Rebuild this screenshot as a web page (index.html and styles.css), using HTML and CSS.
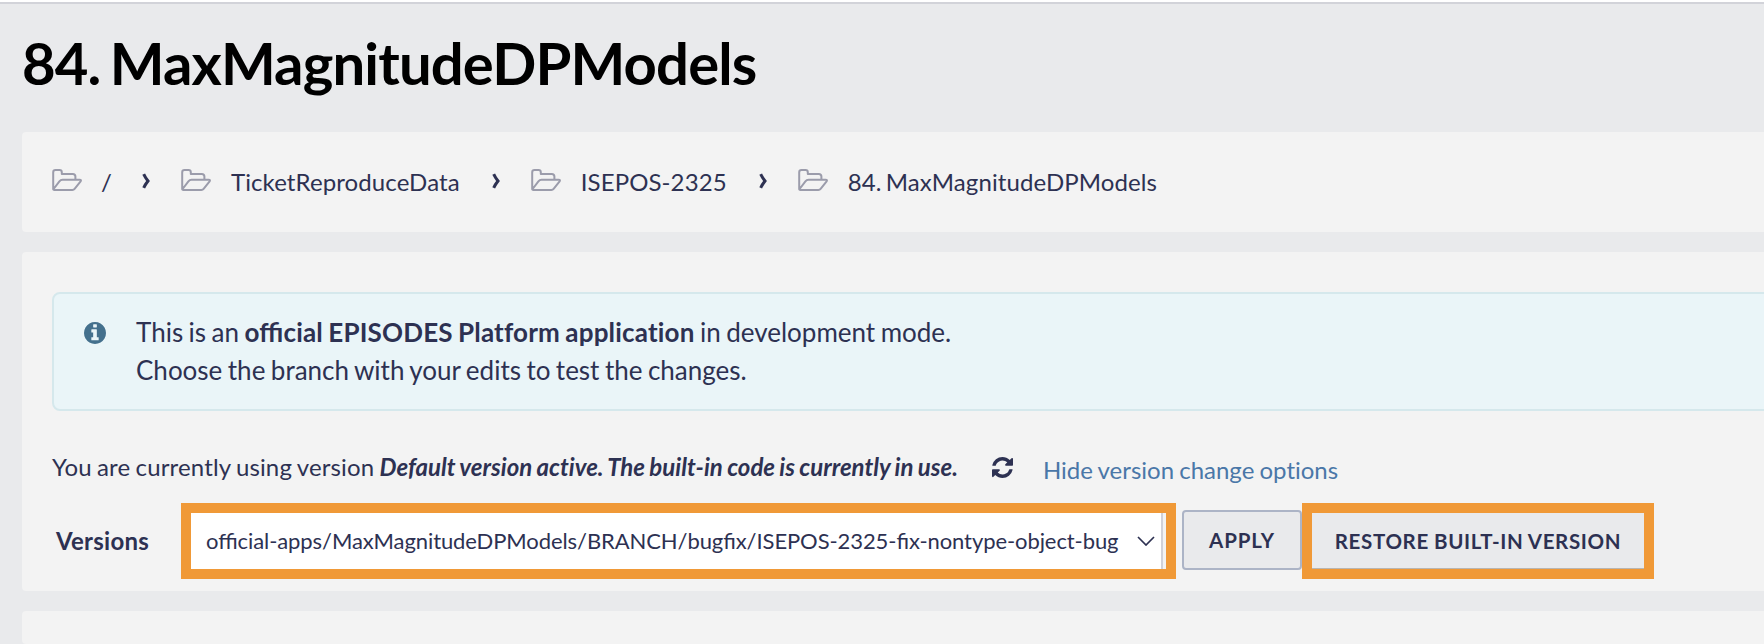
FILE: index.html
```html
<!DOCTYPE html>
<html lang="en">
<head>
    <meta charset="utf-8" />
    <title>84. MaxMagnitudeDPModels</title>
    <link rel="stylesheet" href="styles.css">
</head>
<body>

    <!-- Shared icons -->
    <svg class="icon-defs">
        <symbol id="icon-folder" viewBox="0 0 30 22">
            <path d="M1.2 20.6V3.4Q1.2 1.1 3.5 1.1H7.6Q9.8 1.1 9.8 3.2V4.9H20.8Q23.4 4.9 23.4 7.5V10.8M1.6 20L7.4 12.4Q8.6 10.8 10.6 10.8H27.6Q29.6 10.8 28.6 12.3L22.6 19.9Q21.8 20.9 20.4 20.9H2.4Q.9 20.9 1.6 20" />
        </symbol>
        <symbol id="icon-arrow" viewBox="0 0 8 16">
            <path d="M1.7 1.2Q3 4.2 6 8Q3 11.8 1.7 14.8" />
        </symbol>
    </svg>

    <div class="topbar"></div>

    <h1 class="page-title">84. MaxMagnitudeDPModels</h1>

    <!-- Path -->
    <nav class="panel breadcrumb">
        <svg class="folder"><use href="#icon-folder" /></svg>
        <a class="crumb root">/</a>
        <svg class="arrow"><use href="#icon-arrow" /></svg>
        <svg class="folder"><use href="#icon-folder" /></svg>
        <a class="crumb">TicketReproduceData</a>
        <svg class="arrow"><use href="#icon-arrow" /></svg>
        <svg class="folder"><use href="#icon-folder" /></svg>
        <a class="crumb">ISEPOS-2325</a>
        <svg class="arrow"><use href="#icon-arrow" /></svg>
        <svg class="folder"><use href="#icon-folder" /></svg>
        <a class="crumb">84. MaxMagnitudeDPModels</a>
    </nav>

    <!-- Application version -->
    <section class="panel version-panel">
        <div class="alert">
            <svg class="info-icon" viewBox="0 0 1536 1536">
                <path d="M1024 1248v-160q0-14-9-23t-23-9h-96V544q0-14-9-23t-23-9H544q-14 0-23 9t-9 23v160q0 14 9 23t23 9h96v320h-96q-14 0-23 9t-9 23v160q0 14 9 23t23 9h448q14 0 23-9t9-23zM896 352V192q0-14-9-23t-23-9H672q-14 0-23 9t-9 23v160q0 14 9 23t23 9h192q14 0 23-9t9-23zm640 416q0 209-103 385.500T1153.500 1433 768 1536t-385.500-103T103 1153.500 0 768t103-385.500T382.500 103 768 0t385.500 103T1433 382.500 1536 768z" />
            </svg>
            <div class="alert-text">
                This is an <b><span class="lig">official</span> EPISODES Platform application</b> in development mode.<br>
                Choose the branch with your edits to test the changes.
            </div>
        </div>

        <div class="current-version">
            <span class="current-text">You are currently using version <b><i>Default version active. The built-in code is currently in use.</i></b></span>
            <svg class="refresh-icon" viewBox="0 0 1536 1536">
                <path d="M1511 928q0 5-1 7-64 268-268 434.500T764 1536q-146 0-282.500-55T238 1324l-129 129q-19 19-45 19t-45-19-19-45V960q0-26 19-45t45-19h448q26 0 45 19t19 45-19 45l-137 137q71 66 161 102t187 36q134 0 250-65t186-179q11-17 53-117 8-23 30-23h192q13 0 22.500 9.500t9.500 22.500zm25-800v448q0 26-19 45t-45 19h-448q-26 0-45-19t-19-45 19-45l138-138Q969 256 768 256q-134 0-250 65T332 500q-11 17-53 117-8 23-30 23H50q-13 0-22.500-9.500T18 608v-7q65-268 270-434.500T768 0q146 0 284 55.500T1297 212l130-129q19-19 45-19t45 19 19 45z" />
            </svg>
            <a class="toggle-link">Hide version change options</a>
        </div>

        <div class="version-form">
            <label class="version-label">Versions</label>
            <div class="highlight highlight-select">
                <div class="version-select">
                    <span class="selected lig">official-apps/MaxMagnitudeDPModels/BRANCH/bugfix/ISEPOS-2325-fix-nontype-object-bug</span>
                    <svg class="caret" viewBox="0 0 18 10"><path d="M1 1l8 8 8-8" /></svg>
                </div>
            </div>
            <button class="btn btn-apply">APPLY</button>
            <div class="highlight highlight-restore">
                <button class="btn btn-restore">RESTORE BUILT-IN VERSION</button>
            </div>
        </div>
    </section>

    <section class="panel next-panel"></section>

</body>
</html>
```
FILE: styles.css
```css
body {
    background-color: #e9eaec;
    color: #2d3152;
    font-family: Lato, sans-serif;
    font-size: 24px;
    font-variant-ligatures: none;
    margin: 0;
    height: 644px;
    overflow: hidden;
}

.lig {
    font-variant-ligatures: common-ligatures;
    font-feature-settings: "liga" 1;
}

.icon-defs {
    display: none;
}

.topbar {
    height: 2px;
    background-color: #ffffff;
    border-bottom: 2px solid #d2d3d9;
}

.page-title {
    margin: 24px 0 34px 22px;
    color: #000000;
    font-size: 58px;
    font-weight: bold;
    line-height: 70px;
    letter-spacing: -0.85px;
    word-spacing: -4px;
}

.panel {
    background-color: #f3f3f3;
    border-radius: 4px 0 0 4px;
    margin: 0 0 20px 22px;
    box-sizing: border-box;
}

/* Breadcrumb */
.breadcrumb {
    display: flex;
    align-items: center;
    height: 100px;
    padding-left: 30px;
    white-space: nowrap;
}

.crumb {
    padding-bottom: 2px;
    letter-spacing: 0.1px;
    word-spacing: -2px;
}

.root {
    margin: 0 -2px 0 -1px;
}

.folder {
    width: 30px;
    height: 22px;
    margin: 0 20px 4px 0;
    fill: none;
    stroke: #9b9cab;
    stroke-width: 2;
    stroke-linejoin: round;
}

.arrow {
    width: 8px;
    height: 16px;
    margin: 0 31px 2px 32px;
    fill: none;
    stroke: #2d3152;
    stroke-width: 3;
}

/* Version panel */
.version-panel {
    height: 339px;
    padding: 40px 0 0 30px;
    overflow: hidden;
}

.alert {
    display: flex;
    box-sizing: border-box;
    height: 119px;
    margin-right: -10px;
    padding: 19px 30px;
    background-color: #eaf5f8;
    border: 2px solid #d5e8ec;
    border-radius: 8px;
    font-size: 26px;
    line-height: 38px;
    word-spacing: -1.2px;
}

.alert b {
    letter-spacing: 0.18px;
}

.info-icon {
    width: 22px;
    height: 22px;
    margin: 9px 30px 0 0;
    fill: #44708d;
}

.current-version {
    display: flex;
    align-items: center;
    height: 40px;
    margin: 36px 0 16px;
    white-space: nowrap;
    word-spacing: -1px;
}

.current-text {
    padding-bottom: 2px;
    letter-spacing: 0.14px;
}

.current-text b {
    letter-spacing: 0.02px;
}

.refresh-icon {
    width: 21px;
    height: 21px;
    margin: 0 30px 0 34px;
    fill: #2d3152;
}

.toggle-link {
    color: #4a77a8;
    padding-top: 5px;
}

.version-form {
    display: flex;
    align-items: center;
    height: 76px;
}

.version-label {
    width: 125px;
    padding: 0 0 2px 4px;
    font-weight: bold;
    letter-spacing: 0.25px;
}

.highlight {
    box-sizing: border-box;
    height: 76px;
    border: 10px solid #f09937;
}

.highlight-select {
    width: 995px;
    margin-right: 6px;
}

.version-select {
    display: flex;
    align-items: center;
    justify-content: space-between;
    box-sizing: border-box;
    width: 972px;
    height: 56px;
    padding: 0 6px 0 15px;
    background-color: #ffffff;
    border-right: 2px solid #d0d1d9;
    font-size: 22px;
    letter-spacing: -0.085px;
    white-space: nowrap;
}

.selected {
    padding-bottom: 2px;
}

.caret {
    width: 18px;
    height: 10px;
    fill: none;
    stroke: #2d3152;
    stroke-width: 1.7;
}

.btn {
    box-sizing: border-box;
    padding: 0;
    background-color: #e9eaec;
    color: #2d3152;
    font-family: Lato, sans-serif;
    font-size: 20.5px;
    font-weight: bold;
    letter-spacing: 0.85px;
    white-space: nowrap;
}

.btn-apply {
    width: 120px;
    height: 60px;
    margin-bottom: 2px;
    border: 2px solid #acb4c6;
    border-radius: 4px;
}

.highlight-restore {
    width: 352px;
}

.btn-restore {
    display: block;
    width: 332px;
    height: 56px;
    border: none;
    border-bottom: 1px solid #b9b5b0;
    letter-spacing: 0.65px;
    word-spacing: -0.5px;
}

.next-panel {
    height: 33px;
    margin-bottom: 0;
}
```
